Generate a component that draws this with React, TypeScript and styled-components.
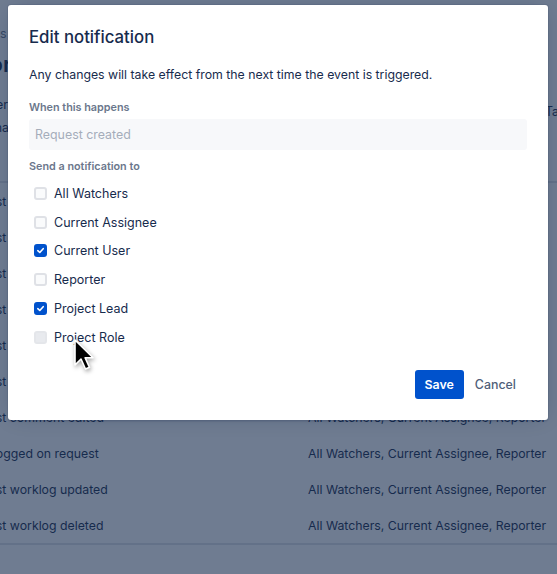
import { FC } from 'react';
import styled, { createGlobalStyle } from 'styled-components';

const GlobalStyle = createGlobalStyle`
  * { box-sizing: border-box; }
  body {
    margin: 0;
    font-family: Inter, "Noto Sans", "Liberation Sans", sans-serif;
    color: #172b4d;
  }
`;

interface IRecipient {
  label: string;
  checked?: boolean;
  hovered?: boolean;
}

const recipients: IRecipient[] = [
  { label: 'All Watchers' },
  { label: 'Current Assignee' },
  { label: 'Current User', checked: true },
  { label: 'Reporter' },
  { label: 'Project Lead', checked: true },
  { label: 'Project Role', hovered: true },
];

const events = [
  'Request created',
  'Request resolved',
  'Request reopened',
  'Request participant added',
  'Request organization added',
  'Request comment added',
  'Request comment edited',
  'Work logged on request',
  'Request worklog updated',
  'Request worklog deleted',
];

const App: FC = () => {
  return (
    <Page>
      <GlobalStyle />
      <PageContent>
        <Breadcrumb>Projects</Breadcrumb>
        <Heading>Error notifications</Heading>
        <Intro>
          Your service desk notifications are sent to the people listed below when an event happens.
          <RightNote>Take a look at what customers see</RightNote>
        </Intro>
        <Table>
          <HeaderCell>Event</HeaderCell>
          <HeaderCell>Recipients</HeaderCell>
          {events.map((e) => (
            <Row key={e}>
              <Cell>{e}</Cell>
              <Cell>All Watchers, Current Assignee, Reporter</Cell>
            </Row>
          ))}
        </Table>
      </PageContent>

      <Overlay />

      <Modal>
        <Title>Edit notification</Title>
        <Description>Any changes will take effect from the next time the event is triggered.</Description>

        <FieldLabel>When this happens</FieldLabel>
        <ReadOnlyInput>Request created</ReadOnlyInput>

        <FieldLabel $gap={10}>Send a notification to</FieldLabel>
        <CheckList>
          {recipients.map((r) => (
            <CheckRow key={r.label}>
              <Box $checked={r.checked} $hovered={r.hovered}>
                {r.checked && (
                  <svg width='9' height='9' viewBox='0 0 10 10'>
                    <path d='M2 5.2 L4.2 7.2 L8 3' fill='none' stroke='#fff' strokeWidth='1.8' strokeLinecap='round' strokeLinejoin='round' />
                  </svg>
                )}
              </Box>
              <CheckLabel>{r.label}</CheckLabel>
            </CheckRow>
          ))}
        </CheckList>

        <Footer>
          <PrimaryButton>Save</PrimaryButton>
          <SubtleButton>Cancel</SubtleButton>
        </Footer>
      </Modal>

      <Cursor width='22' height='34' viewBox='0 0 22 34'>
        <path d='M2 2 L2 27 L8 21 L12.5 31 L16.5 29.3 L12.2 19.8 L20 19.8 Z' fill='#000' stroke='#fff' strokeWidth='1.6' strokeLinejoin='round' />
      </Cursor>
    </Page>
  );
};

const Page = styled.div`
  width: 557px;
  height: 574px;
  position: relative;
  overflow: hidden;
  background: #fff;
`;

const PageContent = styled.div`
  width: 640px;
  margin-left: -41px;
  padding-top: 26px;
`;

const Breadcrumb = styled.div`
  font-size: 12.4px;
  line-height: 16px;
  color: #6b778c;
`;

const Heading = styled.h1`
  margin: 8px 0 0;
  font-size: 22px;
  line-height: 28px;
  font-weight: 600;
`;

const Intro = styled.p`
  margin: 15px 0 0;
  width: 470px;
  font-size: 12.4px;
  line-height: 23px;
  position: relative;
`;

const RightNote = styled.span`
  position: absolute;
  left: 586px;
  top: 7px;
  white-space: nowrap;
`;

const Table = styled.div`
  margin-top: 7px;
  display: grid;
  grid-template-columns: 349px 1fr;
  border-bottom: 2px solid #dfe1e6;
`;

const HeaderCell = styled.div`
  height: 37px;
  display: flex;
  align-items: center;
  font-size: 11px;
  font-weight: 600;
  color: #6b778c;
  border-bottom: 2px solid #dfe1e6;
`;

const Row = styled.div`
  display: contents;
`;

const Cell = styled.div`
  height: 36px;
  display: flex;
  align-items: center;
  font-size: 12.3px;
  white-space: nowrap;
`;

const Overlay = styled.div`
  position: absolute;
  inset: 0;
  background: rgba(23, 43, 77, 0.62);
`;

const Modal = styled.div`
  position: absolute;
  top: 5px;
  left: 8px;
  width: 540px;
  height: 415px;
  padding: 21px 21px 21px;
  border-radius: 3px;
  background: #fff;
  box-shadow: 0 0 0 1px rgba(9, 30, 66, 0.08), 0 2px 1px rgba(9, 30, 66, 0.08), 0 0 20px -6px rgba(9, 30, 66, 0.31);
  display: flex;
  flex-direction: column;
`;

const Title = styled.h2`
  margin: 0;
  font-size: 16.8px;
  line-height: 22px;
  font-weight: 500;
  color: #172b4d;
`;

const Description = styled.p`
  margin: 18px 0 0;
  font-size: 12.3px;
  line-height: 18px;
`;

const FieldLabel = styled.div<{ $gap?: number }>`
  margin-top: ${(p) => p.$gap ?? 17}px;
  font-size: 10.8px;
  line-height: 14px;
  font-weight: 600;
  color: #6b778c;
`;

const ReadOnlyInput = styled.div`
  margin-top: 4px;
  height: 31px;
  padding: 0 6px;
  display: flex;
  align-items: center;
  border-radius: 3px;
  background: #f7f8fa;
  font-size: 12.4px;
  color: #a5adba;
`;

const CheckList = styled.div`
  margin-top: 5px;
  display: flex;
  flex-direction: column;
`;

const CheckRow = styled.div`
  height: 28.8px;
  padding-left: 5px;
  display: flex;
  align-items: center;
  gap: 7px;
`;

const Box = styled.div<{ $checked?: boolean; $hovered?: boolean }>`
  width: 13px;
  height: 13px;
  border-radius: 3px;
  display: flex;
  align-items: center;
  justify-content: center;
  border: 2px solid ${(p) => (p.$checked ? '#0052cc' : p.$hovered ? '#e4e6ea' : '#dfe1e6')};
  background: ${(p) => (p.$checked ? '#0052cc' : p.$hovered ? '#e8eaee' : '#fafbfc')};
`;

const CheckLabel = styled.span`
  font-size: 12.5px;
  color: #172b4d;
`;

const Footer = styled.div`
  margin-top: auto;
  display: flex;
  justify-content: flex-end;
`;

const Button = styled.button`
  height: 29px;
  padding: 0 11px;
  border: none;
  border-radius: 3px;
  font-family: inherit;
  font-size: 12.4px;
  font-weight: 500;
  cursor: pointer;
`;

const PrimaryButton = styled(Button)`
  padding: 0 10px;
  background: #0052cc;
  color: #fff;
  font-weight: 600;
`;

const SubtleButton = styled(Button)`
  background: transparent;
  color: #505f79;
`;

const Cursor = styled.svg`
  position: absolute;
  left: 73px;
  top: 338px;
  filter: drop-shadow(1px 2px 2px rgba(0, 0, 0, 0.35));
`;

export default App;
